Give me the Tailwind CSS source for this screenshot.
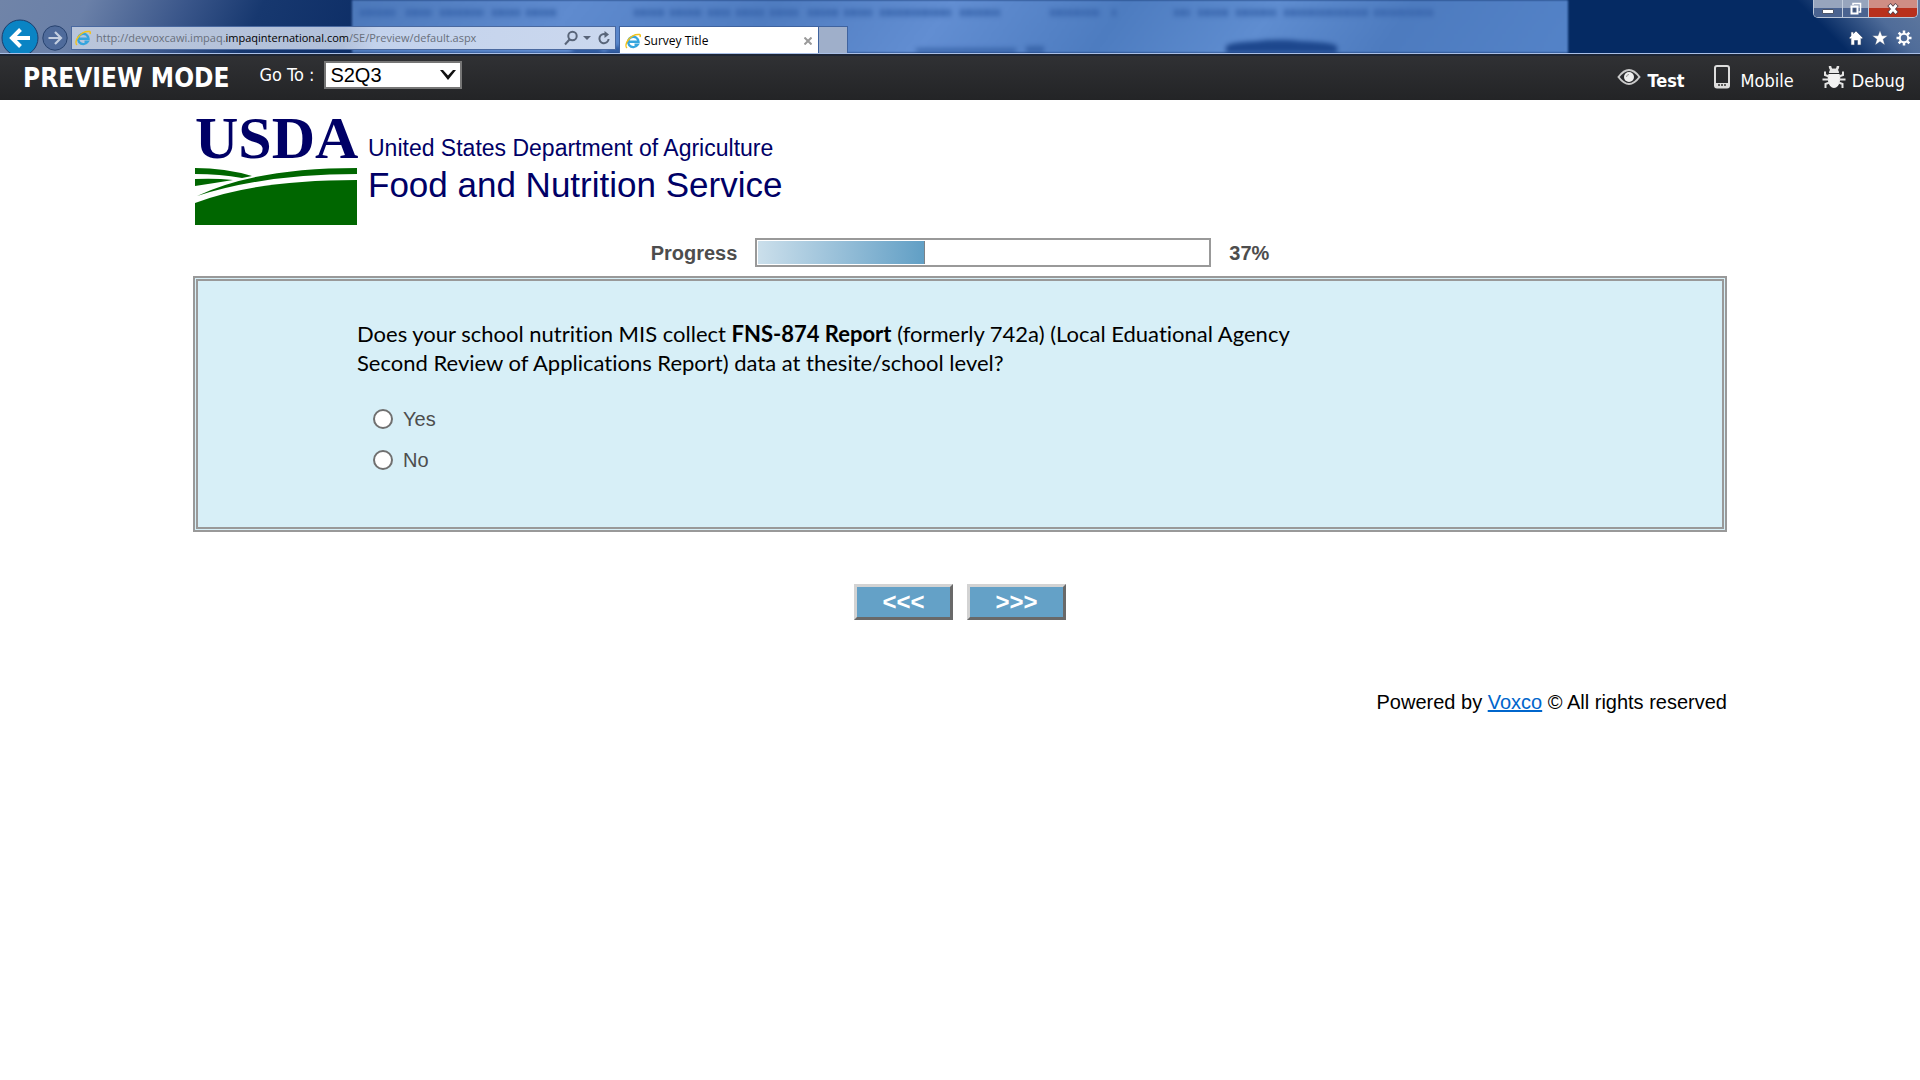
<!DOCTYPE html>
<html lang="en">
  <head>
    <meta charset="UTF-8" />
    <meta name="viewport" content="width=device-width, initial-scale=1.0" />
    <title>Survey Title</title>
    <script src="https://cdn.jsdelivr.net/npm/@tailwindcss/browser@4"></script>
  </head>
  <body class="min-h-screen bg-white font-['Liberation_Sans',Arial,sans-serif] text-black">
    <!-- Browser chrome -->
    <header class="relative h-[54px] overflow-hidden border-b border-[#a9bfe6] bg-[linear-gradient(115deg,#7084a8_0px,#6a80a8_80px,#3a568a_170px,#17386f_240px,#0a2a63_380px)] font-['Open_Sans','Noto_Sans',sans-serif]">
      <!-- Right end of the glass frame -->
      <div class="absolute inset-y-0 right-0 w-[360px] bg-[linear-gradient(45deg,#052a63_70%,#4f6c99_86%,#60799f_100%)]"></div>
      <!-- Window seen through the glass -->
      <div class="absolute inset-y-0 left-[352px] right-[352px] bg-[linear-gradient(125deg,#4c78ba_0%,#5f8bcf_18%,#4f7cc0_34%,#628ed2_48%,#4d7cc0_62%,#5f8dd0_74%,#4d7bbf_85%,#5483c8_100%)] blur-[1px]">
        <svg class="h-full w-full blur-[2px]" viewBox="0 0 1216 54" preserveAspectRatio="none" aria-hidden="true">
          <g stroke="#3965ac" stroke-width="7" opacity=".85">
            <path stroke-dasharray="5 1 6 1 4 1" d="M8 13h36M54 13h26M88 13h44M140 13h28M174 13h30M282 13h30M318 13h32M356 13h22M384 13h28M418 13h28M456 13h30M492 13h28M528 13h72M608 13h40M698 13h50M760 13h4M822 13h16M846 13h30M884 13h40M932 13h84M1022 13h60" />
          </g>
          <g fill="#1d478d">
            <path d="M220 46h30v8h-30zM254 48h115v6H254z" opacity=".8" />
            <path d="M874 54v-7q3-4 30-5 22-3 46 0 32 1 35 5v7z" />
            <path d="M564 49h100v5H564zM674 47h18v7h-18z" opacity=".5" />
          </g>
        </svg>
      </div>

      <div class="relative flex h-full items-start">
        <div class="flex w-[71px] shrink-0 items-start gap-[3px] pl-px pt-[19px]">
          <button type="button" aria-label="Back" class="shrink-0">
            <svg viewBox="0 0 38 38" class="size-[38px]">
              <circle cx="19" cy="19" r="18" fill="#0a84c4" stroke="#1d3d6c" />
              <path d="M29 19H11M19.500 10.500L11 19l8.500 8.500" fill="none" stroke="#fff" stroke-width="4" />
            </svg>
          </button>
          <button type="button" aria-label="Forward" class="shrink-0 pt-[6px]">
            <svg viewBox="0 0 26 26" class="size-[26px]">
              <circle cx="13" cy="13" r="12.200" fill="#4f6b9b" stroke="#28436f" />
              <path d="M6.500 13h12M13 7l6 6-6 6" fill="none" stroke="#c3cee0" stroke-width="2.200" />
            </svg>
          </button>
        </div>

        <!-- Address bar -->
        <div class="mt-[26px] flex h-6 w-[545px] shrink-0 items-center border border-[#4a69a0] bg-[linear-gradient(100deg,#bac6db_0%,#b1c0da_50%,#c3d2ec_56%,#cbd8ee_100%)] pl-[3px] pr-1">
          <svg viewBox="0 0 16 16" class="size-4 shrink-0">
            <path d="M4 8.800h9.500a5.200 5.200 0 1 0-.8 2.900H9.500" fill="none" stroke="#36a5de" stroke-width="2.400" />
            <path d="M2 15C-1.500 12 5 .5 14.500 1.500q1.300.5.500 2.500" fill="none" stroke="#f2c21b" stroke-width="1.500" />
          </svg>
          <div role="textbox" contenteditable="true" aria-label="Address" class="ml-[5px] grow whitespace-nowrap text-[11px] text-[#686f7b] outline-none">http://devvoxcawi.impaq.<span class="text-black">impaqinternational.com</span>/SE/Preview/default.aspx</div>
          <button type="button" aria-label="Search">
            <svg viewBox="0 0 16 16" class="size-4" fill="none" stroke="#596579" stroke-width="2">
              <circle cx="9.500" cy="6" r="4.200" />
              <path d="M6.500 9.500L2 14.500" />
            </svg>
          </button>
          <button type="button" aria-label="Show address list" class="ml-1">
            <svg viewBox="0 0 8 8" class="size-2"><path d="M0 2h8L4 6z" fill="#596579" /></svg>
          </button>
          <button type="button" aria-label="Refresh" class="ml-[6px]">
            <svg viewBox="0 0 14 14" class="size-[14px]">
              <path d="M9 3.500A4.600 4.600 0 1 0 11.600 8" fill="none" stroke="#596579" stroke-width="2" />
              <path d="M7.500 0v7l4.500-3.500z" fill="#596579" />
            </svg>
          </button>
        </div>

        <!-- Tabs -->
        <div class="ml-[3px] mt-[26px] flex h-[28px] w-[200px] shrink-0 items-center border-x border-t border-[#3f639f] bg-white pl-[5px] pr-[6px] text-xs">
          <svg viewBox="0 0 16 16" class="size-4 shrink-0">
            <path d="M4 8.800h9.500a5.200 5.200 0 1 0-.8 2.900H9.500" fill="none" stroke="#36a5de" stroke-width="2.400" />
            <path d="M2 15C-1.500 12 5 .5 14.500 1.500q1.300.5.500 2.500" fill="none" stroke="#f2c21b" stroke-width="1.500" />
          </svg>
          <span class="ml-[3px] grow">Survey Title</span>
          <button type="button" aria-label="Close tab">
            <svg viewBox="0 0 8 8" class="size-2"><path d="M.5.5l7 7M7.500.5l-7 7" stroke="#9a9a9a" stroke-width="2" /></svg>
          </button>
        </div>
        <button type="button" aria-label="New tab" class="mt-[26px] h-[28px] w-[29px] shrink-0 border-r border-t border-[#3f639f] bg-[#9fafca]"></button>

        <!-- Window buttons and tools -->
        <div class="ml-auto flex flex-col items-end">
          <div class="mr-[2px] flex h-[18px] overflow-hidden rounded-b-[5px] border border-t-0 border-[#b9c5d8]">
            <button type="button" aria-label="Minimize" class="flex w-[28px] items-center justify-center bg-linear-to-b from-[#97a5bd] from-50% to-[#4a6390] to-50%">
              <svg viewBox="0 0 12 12" class="size-3"><path d="M.5 6.500h11v4H.5z" fill="#fff" stroke="#4c566b" /></svg>
            </button>
            <button type="button" aria-label="Restore" class="flex w-[27px] items-center justify-center border-x border-[#c2cddd] bg-linear-to-b from-[#97a5bd] from-50% to-[#4a6390] to-50%">
              <svg viewBox="0 0 13 13" class="size-[13px]" fill="none">
                <path d="M4 3V1.500h7.500V10H9.500" stroke="#fff" stroke-width="1.500" />
                <path d="M2.500 4.500h6v7h-6z" stroke="#fff" stroke-width="2" />
                <path d="M4.500 6.500h2v3h-2z" fill="#42506a" />
              </svg>
            </button>
            <button type="button" aria-label="Close" class="flex w-[48px] items-center justify-center bg-linear-to-b from-[#cf8d84] from-45% to-[#b8301c] to-50%">
              <svg viewBox="0 0 12 12" class="size-3">
                <path d="M2 1.500l8 9M10 1.500l-8 9" stroke="#55404a" stroke-width="4.500" />
                <path d="M2.500 2l7 8M9.500 2l-7 8" stroke="#fff" stroke-width="2.800" />
              </svg>
            </button>
          </div>
          <div class="mr-2 mt-3 flex gap-2">
            <button type="button" aria-label="Home">
              <svg viewBox="0 0 16 16" class="size-4"><path d="M8 1l7 7-1.500 1L13 8.500V15H9.500v-4.500h-3V15H3V8.500L2.500 9 1 8l2-2V2h2.500v1.500z" fill="#fff" stroke="#3a4d6e" stroke-width=".6" /></svg>
            </button>
            <button type="button" aria-label="Favorites">
              <svg viewBox="0 0 16 16" class="size-4"><path d="M8 .5l2 5.300h5.700l-4.600 3.500 1.700 5.700L8 11.600 3.200 15l1.700-5.700L.3 5.800H6z" fill="#fff" stroke="#3a4d6e" stroke-width=".3" /></svg>
            </button>
            <button type="button" aria-label="Tools">
              <svg viewBox="0 0 16 16" class="size-4" fill="none" stroke="#fff">
                <circle cx="8" cy="8" r="4.200" stroke-width="2" />
                <path d="M8 .5v3M8 12.500v3M.5 8h3M12.500 8h3M2.700 2.700l2 2M11.300 11.300l2 2M13.300 2.700l-2 2M4.700 11.300l-2 2" stroke-width="2.500" />
              </svg>
            </button>
          </div>
        </div>
      </div>
    </header>

    <!-- Preview toolbar -->
    <nav class="flex h-[46px] items-center justify-between border-t-2 border-[#1d2534] bg-linear-to-b from-[#303134] to-[#232426] pl-[23px] pr-[15px] font-['DejaVu_Sans_Condensed','DejaVu_Sans',sans-serif] text-lg text-white">
      <div class="flex items-center">
        <h1 class="text-[26px] font-bold">PREVIEW MODE</h1>
        <div class="flex items-center gap-[10px] pb-[7px] pl-[30px]">
          <label for="goto">Go To :</label>
          <div class="relative">
            <select id="goto" class="block h-7 w-[138px] appearance-none border-2 border-[#767676] bg-white pl-1 font-['Liberation_Sans',Arial,sans-serif] text-xl leading-6 text-black">
              <option>S2Q3</option>
            </select>
            <svg viewBox="0 0 18 12" class="pointer-events-none absolute right-[5px] top-2 h-3 w-[18px]">
              <path d="M1 1h3l5 5.500L14 1h3L9 11z" fill="#111" />
            </svg>
          </div>
        </div>
      </div>
      <div class="flex items-center gap-7 pt-[6px]">
        <a href="#" class="flex items-center gap-[7px] font-bold">
          <svg viewBox="0 0 24 24" class="mb-2 size-6">
            <path d="M1.500 12Q12-2 22.500 12 12 26 1.500 12z" fill="none" stroke="#c9c9c9" stroke-width="2" />
            <circle cx="12" cy="12" r="5" fill="#eee" />
            <path d="M9.500 12q0-2.500 2.500-2.500" fill="none" stroke="#999" />
          </svg>
          Test
        </a>
        <a href="#" class="flex items-center gap-[10px]">
          <svg viewBox="0 0 18 24" class="mb-2 h-6 w-[18px]">
            <rect x="2" y="1" width="14" height="21.500" rx="2" fill="none" stroke="#ddd" stroke-width="2" />
            <path d="M2 18h14v4H2z" fill="#ddd" />
            <path d="M5 20h2M8 20h2M11 20h2" stroke="#333" stroke-width="1.500" />
          </svg>
          Mobile
        </a>
        <a href="#" class="flex items-center gap-[6px]">
          <svg viewBox="0 0 24 24" class="mb-2 size-6" stroke="#e4e4e4" fill="none">
            <path d="M8 1q0 3 2 3.500M16 1q0 3-2 3.500" stroke-width="2.500" />
            <path d="M7 8Q7 3.500 12 3.500T17 8z" fill="#e8e8e8" stroke="none" />
            <path d="M6.500 9h11q1.500 3 .5 7-1.500 7-6 7t-6-7q-1-4 .5-7z" fill="#f2f2f2" stroke="none" />
            <path d="M7 11.500L3 10V6.500M17 11.500l4-1.500V6.500M7 14.500H.5M17 14.500h6.500M7.500 17.500L3.500 19v4M16.500 17.500l4 1.500v4" stroke-width="2" />
          </svg>
          Debug
        </a>
      </div>
    </nav>

    <!-- Survey -->
    <main class="px-[193px] pt-3">
      <div class="flex gap-[11px] pl-[2px] text-[#000066]">
        <div class="w-[162px]">
          <div class="font-['Liberation_Serif','Times_New_Roman',serif] text-[60px] font-bold leading-[52px]">USDA</div>
          <svg viewBox="0 0 162 58" class="mt-[3px] h-[58px] w-[162px]" fill="#006600">
            <path d="M0 1Q30 1 57 9L47 11Q25 7 0 7z" />
            <path d="M0 12Q20 11 38 13Q20 16 0 19z" />
            <path d="M2 29Q60 1 162 1v6Q70 7 2 29z" />
            <path d="M0 36Q60 13 162 13v45H0z" />
          </svg>
        </div>
        <div class="pt-[20px]">
          <p class="text-[23px] leading-8">United States Department of Agriculture</p>
          <p class="text-[35px] leading-[42px]">Food and Nutrition Service</p>
        </div>
      </div>

      <div class="mt-[13px] flex items-center justify-center text-xl font-bold text-[#4d4d4d]">
        <span id="progress-label">Progress</span>
        <div role="progressbar" aria-labelledby="progress-label" aria-valuenow="37" aria-valuemin="0" aria-valuemax="100" class="mx-[18px] h-[29px] w-[456px] border-2 border-[#999] p-px">
          <div class="h-full border-r border-[#7b8288] bg-linear-to-r from-[#cbdfeb] to-[#619fc5]" style="width: 37%"></div>
        </div>
        <span>37%</span>
      </div>

      <form>
        <fieldset class="mt-[9px] border-[5px] border-double border-[#999] bg-[#d7eff7] pb-[47px] pl-[159px] pr-8 pt-[38px]">
          <p id="question" class="max-w-[960px] font-['Lato',Calibri,sans-serif] text-[22px] leading-[29px] [font-variant-ligatures:none]">
            Does your school nutrition MIS collect <b>FNS-874 Report</b> (formerly 742a) (Local Eduational Agency Second Review of Applications Report) data at thesite/school level?
          </p>
          <div role="radiogroup" aria-labelledby="question" class="mt-[21px] flex flex-col pl-4 text-xl text-[#4d4d4d]">
            <div class="flex h-[41px] items-center gap-[10px]">
              <input type="radio" id="yes" name="answer" class="size-5 appearance-none rounded-full border-2 border-[#707070] bg-white checked:bg-[#707070]" />
              <label for="yes">Yes</label>
            </div>
            <div class="flex h-[41px] items-center gap-[10px]">
              <input type="radio" id="no" name="answer" class="size-5 appearance-none rounded-full border-2 border-[#707070] bg-white checked:bg-[#707070]" />
              <label for="no">No</label>
            </div>
          </div>
        </fieldset>

        <div class="mt-[52px] flex justify-center gap-[14px] text-2xl font-bold leading-[30px] text-white">
          <button type="button" class="h-9 w-[99px] border-3 border-t-[#d3d3d3] border-r-[#696969] border-b-[#696969] border-l-[#d3d3d3] bg-[#64a1c7]">&lt;&lt;&lt;</button>
          <button type="button" class="h-9 w-[99px] border-3 border-t-[#d3d3d3] border-r-[#696969] border-b-[#696969] border-l-[#d3d3d3] bg-[#64a1c7]">&gt;&gt;&gt;</button>
        </div>
      </form>

      <footer class="mt-[68px] text-right text-xl">
        Powered by <a href="#" class="text-[#0066cc] underline">Voxco</a> © All rights reserved
      </footer>
    </main>
  </body>
</html>
